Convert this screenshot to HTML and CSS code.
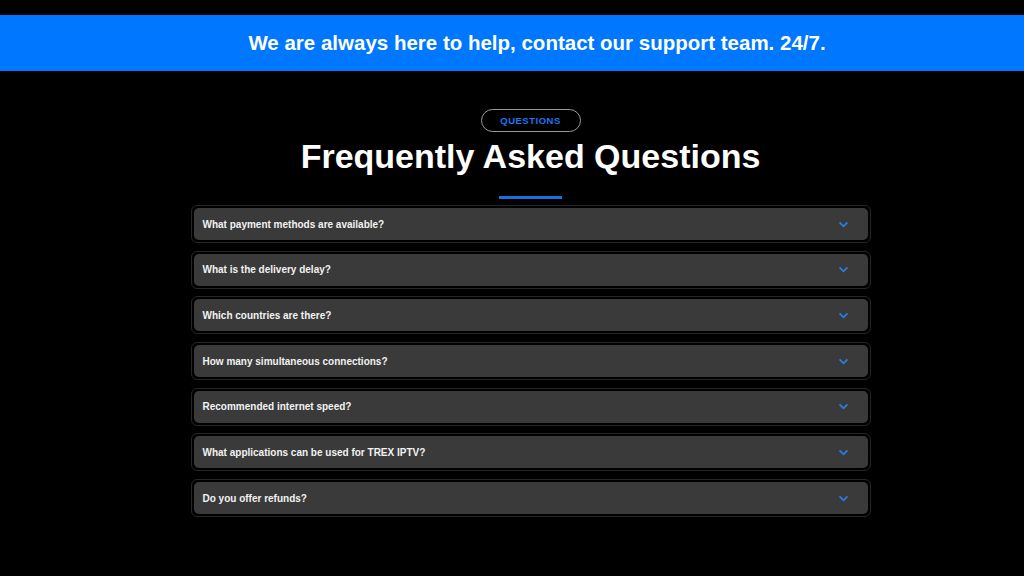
FILE: index.html
```html
<!DOCTYPE html>
<html lang="en">
<head>
<meta charset="utf-8">
<title>FAQ</title>
<link rel="stylesheet" href="styles.css">
</head>
<body>
<div class="banner">We are always here to help, contact our support team. 24/7.</div>
<section class="faq">
  <div class="pill">QUESTIONS</div>
  <h1 class="title">Frequently Asked Questions</h1>
  <div class="bar"></div>
  <div class="list">
    <div class="item"><div class="q"><span>What payment methods are available?</span><svg class="chev" viewBox="0 0 12 8"><path d="M1.5 1.5 6 6 10.5 1.5"/></svg></div></div>
    <div class="item"><div class="q"><span>What is the delivery delay?</span><svg class="chev" viewBox="0 0 12 8"><path d="M1.5 1.5 6 6 10.5 1.5"/></svg></div></div>
    <div class="item"><div class="q"><span>Which countries are there?</span><svg class="chev" viewBox="0 0 12 8"><path d="M1.5 1.5 6 6 10.5 1.5"/></svg></div></div>
    <div class="item"><div class="q"><span>How many simultaneous connections?</span><svg class="chev" viewBox="0 0 12 8"><path d="M1.5 1.5 6 6 10.5 1.5"/></svg></div></div>
    <div class="item"><div class="q"><span>Recommended internet speed?</span><svg class="chev" viewBox="0 0 12 8"><path d="M1.5 1.5 6 6 10.5 1.5"/></svg></div></div>
    <div class="item"><div class="q"><span>What applications can be used for TREX IPTV?</span><svg class="chev" viewBox="0 0 12 8"><path d="M1.5 1.5 6 6 10.5 1.5"/></svg></div></div>
    <div class="item"><div class="q"><span>Do you offer refunds?</span><svg class="chev" viewBox="0 0 12 8"><path d="M1.5 1.5 6 6 10.5 1.5"/></svg></div></div>
  </div>
</section>
</body>
</html>
```
FILE: styles.css
```css
html, body {
  margin: 0;
  padding: 0;
  background: #000;
  font-family: "Liberation Sans", Arial, sans-serif;
}
.banner {
  margin-top: 15px;
  height: 56px;
  box-sizing: border-box;
  padding-left: 50px;
  background: #0077ff;
  color: #fff;
  font-weight: bold;
  font-size: 20.5px;
  display: flex;
  align-items: center;
  justify-content: center;
}
.faq {
  display: flex;
  flex-direction: column;
  align-items: center;
  padding-top: 38px;
  padding-left: 37px;
}
.pill {
  box-sizing: border-box;
  width: 100px;
  height: 23px;
  border: 1px solid #9a9a9a;
  border-radius: 12px;
  color: #1877f2;
  font-size: 9.5px;
  font-weight: bold;
  letter-spacing: 0.5px;
  display: flex;
  align-items: center;
  justify-content: center;
}
.title {
  margin: 3px 0 0;
  color: #fff;
  font-size: 34px;
  line-height: 42px;
  font-weight: bold;
}
.bar {
  margin-top: 19px;
  width: 63px;
  height: 3px;
  background: #1b6fe0;
}
.list {
  margin-top: 6px;
  width: 680px;
  display: flex;
  flex-direction: column;
  gap: 7.7px;
}
.item {
  box-sizing: border-box;
  height: 38px;
  border: 1px solid #262626;
  border-radius: 6px;
  padding: 2px;
}
.q {
  height: 100%;
  background: #3a3a3a;
  border-radius: 5px;
  display: flex;
  align-items: center;
  justify-content: space-between;
  padding: 0 19px 0 9px;
  color: #f2f2f2;
  font-size: 10px;
  font-weight: bold;
}
.chev {
  width: 11px;
  height: 7px;
  fill: none;
  stroke: #2a7de1;
  stroke-width: 2;
}
```
